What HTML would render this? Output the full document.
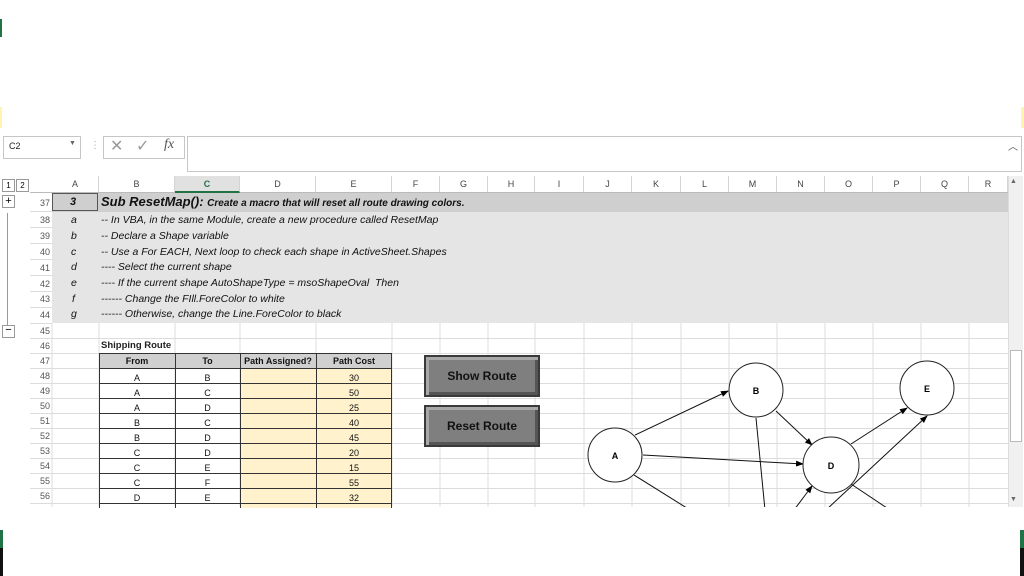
<!DOCTYPE html><html><head><style>
body{margin:0;width:1024px;height:576px;overflow:hidden;background:#fff;font-family:"Liberation Sans",sans-serif;position:relative}
.a{position:absolute}
.t{position:absolute;font-size:10px;color:#222}
.ch{position:absolute;top:176px;height:16px;line-height:16px;font-size:9px;color:#444;text-align:center;border-right:1px solid #d4d4d4}
.rn{position:absolute;left:30px;width:20px;text-align:right;font-size:9px;color:#555}
.it{position:absolute;font-style:italic;font-size:10.5px;color:#111}
.td{position:absolute;font-size:9px;text-align:center;color:#111}
.btn{position:absolute;left:424px;width:112px;height:38px;background:#7f7f7f;border:2px solid #3a3a3a;box-shadow:inset 3px 3px 0 #a8a8a8,inset -3px -3px 0 #555;font-weight:bold;font-size:12px;line-height:38px;text-align:center;color:#111}
</style></head><body>
<div class="a" style="left:0;top:19px;width:2px;height:18px;background:#217346"></div>
<div class="a" style="left:0;top:107px;width:2px;height:21px;background:#fff5b0"></div>
<div class="a" style="left:1021px;top:107px;width:3px;height:21px;background:#fff5b0"></div>
<!-- formula bar -->
<div class="a" style="left:3px;top:136px;width:76px;height:21px;border:1px solid #c6c6c6"></div>
<div class="t" style="left:9px;top:141px;font-size:9px">C2</div>
<div class="t" style="left:69px;top:140px;font-size:7px;color:#666">▼</div>
<div class="t" style="left:90px;top:140px;color:#aaa">⋮</div>
<div class="a" style="left:103px;top:136px;width:80px;height:21px;border:1px solid #c6c6c6"></div>
<div class="t" style="left:110px;top:136px;font-size:16px;color:#999">✕</div>
<div class="t" style="left:136px;top:136px;font-size:16px;color:#999">✓</div>
<div class="t" style="left:164px;top:137px;font-size:14px;font-style:italic;font-family:'Liberation Serif',serif;color:#555">fx</div>
<div class="a" style="left:187px;top:136px;width:833px;height:34px;border:1px solid #c6c6c6"></div>
<div class="t" style="left:1008px;top:138px;font-size:10px;color:#555">︿</div>
<!-- outline buttons -->
<div class="a" style="left:2px;top:179px;width:11px;height:11px;border:1px solid #999;font-size:8px;text-align:center;line-height:11px">1</div>
<div class="a" style="left:16px;top:179px;width:11px;height:11px;border:1px solid #999;font-size:8px;text-align:center;line-height:11px">2</div>
<div class="a" style="left:2px;top:195px;width:11px;height:11px;border:1px solid #999;font-size:11px;text-align:center;line-height:11px">+</div>
<div class="a" style="left:2px;top:325px;width:11px;height:11px;border:1px solid #999;font-size:11px;text-align:center;line-height:9px">−</div>
<div class="a" style="left:7px;top:213px;width:1px;height:112px;background:#999"></div>
<!-- column headers -->
<div class="a" style="left:30px;top:176px;width:978px;height:16px;background:#fff;border-bottom:1px solid #bbb"></div>
<div class="ch" style="left:52px;width:46px">A</div>
<div class="ch" style="left:99px;width:75px">B</div>
<div class="ch" style="left:175px;width:64px;background:#e1e1e1;color:#217346;font-weight:bold;border-bottom:2px solid #217346;height:15px">C</div>
<div class="ch" style="left:240px;width:75px">D</div>
<div class="ch" style="left:316px;width:75px">E</div>
<div class="ch" style="left:392px;width:47px">F</div>
<div class="ch" style="left:440px;width:47px">G</div>
<div class="ch" style="left:488px;width:46px">H</div>
<div class="ch" style="left:535px;width:48px">I</div>
<div class="ch" style="left:584px;width:47px">J</div>
<div class="ch" style="left:632px;width:48px">K</div>
<div class="ch" style="left:681px;width:47px">L</div>
<div class="ch" style="left:729px;width:47px">M</div>
<div class="ch" style="left:777px;width:47px">N</div>
<div class="ch" style="left:825px;width:47px">O</div>
<div class="ch" style="left:873px;width:47px">P</div>
<div class="ch" style="left:921px;width:47px">Q</div>
<div class="ch" style="left:969px;width:38px">R</div>
<!-- grid -->
<svg class="a" style="left:0;top:0" width="1024" height="576">
<g stroke="#dcdcdc" stroke-width="1">
<path d="M52 323V507M99 323V507M175 323V507M240 323V507M316 323V507M392 323V507M440 323V507M488 323V507M535 323V507M584 323V507M632 323V507M681 323V507M729 323V507M777 323V507M825 323V507M873 323V507M921 323V507M969 323V507"/>
<path d="M30 338.5H1008M30 353.5H1008M30 368.5H1008M30 383.5H1008M30 398.5H1008M30 413.5H1008M30 428.5H1008M30 443.5H1008M30 458.5H1008M30 473.5H1008M30 488.5H1008M30 503.5H1008"/>
<path d="M30 211.5H52M30 227.5H52M30 243.5H52M30 259.5H52M30 275.5H52M30 291.5H52M30 307.5H52M30 323.5H52"/>
</g></svg>
<div class="a" style="left:52px;top:193px;width:956px;height:19px;background:#cfcfcf"></div>
<div class="a" style="left:52px;top:212px;width:956px;height:111px;background:#e5e5e5"></div>
<div class="a" style="left:52px;top:193px;width:46px;height:18px;border:1px solid #555;box-sizing:border-box"></div>
<div class="a" style="left:1008px;top:176px;width:14px;height:331px;background:#f0f0f0;border-left:1px solid #ddd"></div>
<div class="a" style="left:1010px;top:350px;width:10px;height:90px;background:#fff;border:1px solid #bbb"></div>
<div class="t" style="left:1010px;top:178px;font-size:7px;color:#666">▲</div>
<div class="t" style="left:1010px;top:496px;font-size:7px;color:#666">▼</div>
<!-- row numbers -->
<div class="rn" style="top:198px">37</div><div class="rn" style="top:215px">38</div><div class="rn" style="top:231px">39</div><div class="rn" style="top:247px">40</div><div class="rn" style="top:263px">41</div><div class="rn" style="top:279px">42</div><div class="rn" style="top:294px">43</div><div class="rn" style="top:310px">44</div>
<div class="rn" style="top:326px">45</div><div class="rn" style="top:341px">46</div><div class="rn" style="top:356px">47</div><div class="rn" style="top:371px">48</div><div class="rn" style="top:386px">49</div><div class="rn" style="top:401px">50</div><div class="rn" style="top:416px">51</div><div class="rn" style="top:431px">52</div><div class="rn" style="top:446px">53</div><div class="rn" style="top:461px">54</div><div class="rn" style="top:476px">55</div><div class="rn" style="top:491px">56</div>
<!-- instructions -->
<div class="it" style="left:70px;top:196px;font-weight:bold;font-size:11px">3</div>
<div class="it" style="left:101px;top:194px;font-weight:bold;font-size:13px">Sub ResetMap(): <span style="font-size:10px">Create a macro that will reset all route drawing colors.</span></div>
<div class="it" style="left:71px;top:214px">a</div><div class="it" style="left:101px;top:214px">-- In VBA, in the same Module, create a new procedure called ResetMap</div>
<div class="it" style="left:71px;top:230px">b</div><div class="it" style="left:101px;top:230px">-- Declare a Shape variable</div>
<div class="it" style="left:71px;top:246px">c</div><div class="it" style="left:101px;top:246px">-- Use a For EACH, Next loop to check each shape in ActiveSheet.Shapes</div>
<div class="it" style="left:71px;top:261px">d</div><div class="it" style="left:101px;top:261px">---- Select the current shape</div>
<div class="it" style="left:71px;top:277px">e</div><div class="it" style="left:101px;top:277px">---- If the current shape AutoShapeType = msoShapeOval&nbsp; Then</div>
<div class="it" style="left:72px;top:293px">f</div><div class="it" style="left:101px;top:293px">------ Change the FIll.ForeColor to white</div>
<div class="it" style="left:71px;top:308px">g</div><div class="it" style="left:101px;top:308px">------ Otherwise, change the Line.ForeColor to black</div>
<!-- table -->
<div class="t" style="left:101px;top:340px;font-weight:bold;font-size:9.5px">Shipping Route</div>
<div class="a" style="left:99px;top:353px;width:293px;height:15px;background:#d0d0d0"></div>
<div class="a" style="left:240px;top:368px;width:152px;height:140px;background:#fff2cc"></div>
<svg class="a" style="left:0;top:0" width="1024" height="576"><g stroke="#333" stroke-width="1" fill="none">
<path d="M99.5 353V508M175.5 353V508M240.5 353V508M316.5 353V508M391.5 353V508"/>
<path d="M99 353.5H392M99 368.5H392M99 383.5H392M99 398.5H392M99 413.5H392M99 428.5H392M99 443.5H392M99 458.5H392M99 473.5H392M99 488.5H392M99 503.5H392"/></g></svg>
<div class="td" style="left:99px;width:76px;top:356px;font-weight:bold">From</div><div class="td" style="left:175px;width:65px;top:356px;font-weight:bold">To</div><div class="td" style="left:240px;width:76px;top:356px;font-weight:bold">Path Assigned?</div><div class="td" style="left:316px;width:76px;top:356px;font-weight:bold">Path Cost</div>
<div class="td" style="left:99px;width:76px;top:371px;line-height:15px">A<br>A<br>A<br>B<br>B<br>C<br>C<br>C<br>D</div>
<div class="td" style="left:175px;width:65px;top:371px;line-height:15px">B<br>C<br>D<br>C<br>D<br>D<br>E<br>F<br>E</div>
<div class="td" style="left:316px;width:76px;top:371px;line-height:15px">30<br>50<br>25<br>40<br>45<br>20<br>15<br>55<br>32</div>
<div class="btn" style="top:355px">Show Route</div>
<div class="btn" style="top:405px">Reset Route</div>
<!-- diagram -->
<svg class="a" style="left:0;top:0" width="1024" height="507">
<defs><marker id="m" markerWidth="8" markerHeight="8" refX="7" refY="4" orient="auto"><path d="M0 1L8 4L0 7z" fill="#000"/></marker></defs>
<g stroke="#111" stroke-width="1" fill="none">
<path d="M635 435L728 391" marker-end="url(#m)"/>
<path d="M776 411L812 445" marker-end="url(#m)"/>
<path d="M643 455L803 464" marker-end="url(#m)"/>
<path d="M634 475L690 510"/>
<path d="M756 418L765 510"/>
<path d="M851 444L907 408" marker-end="url(#m)"/>
<path d="M826 510L927 416" marker-end="url(#m)"/>
<path d="M794 510L812 486" marker-end="url(#m)"/>
<path d="M851 484L890 510"/>
</g>
<g stroke="#222" fill="#fff"><circle cx="615" cy="455" r="27"/><circle cx="756" cy="390" r="27"/><circle cx="831" cy="465" r="28"/><circle cx="927" cy="388" r="27"/></g>
<g font-family="Liberation Sans" font-weight="bold" font-size="9" text-anchor="middle"><text x="615" y="459">A</text><text x="756" y="394">B</text><text x="831" y="469">D</text><text x="927" y="392">E</text></g>
</svg>
<div class="a" style="left:0;top:530px;width:3px;height:18px;background:#217346"></div>
<div class="a" style="left:0;top:548px;width:3px;height:28px;background:#111"></div>
<div class="a" style="left:1020px;top:530px;width:4px;height:18px;background:#217346"></div>
<div class="a" style="left:1020px;top:548px;width:4px;height:28px;background:#111"></div>
</body></html>
